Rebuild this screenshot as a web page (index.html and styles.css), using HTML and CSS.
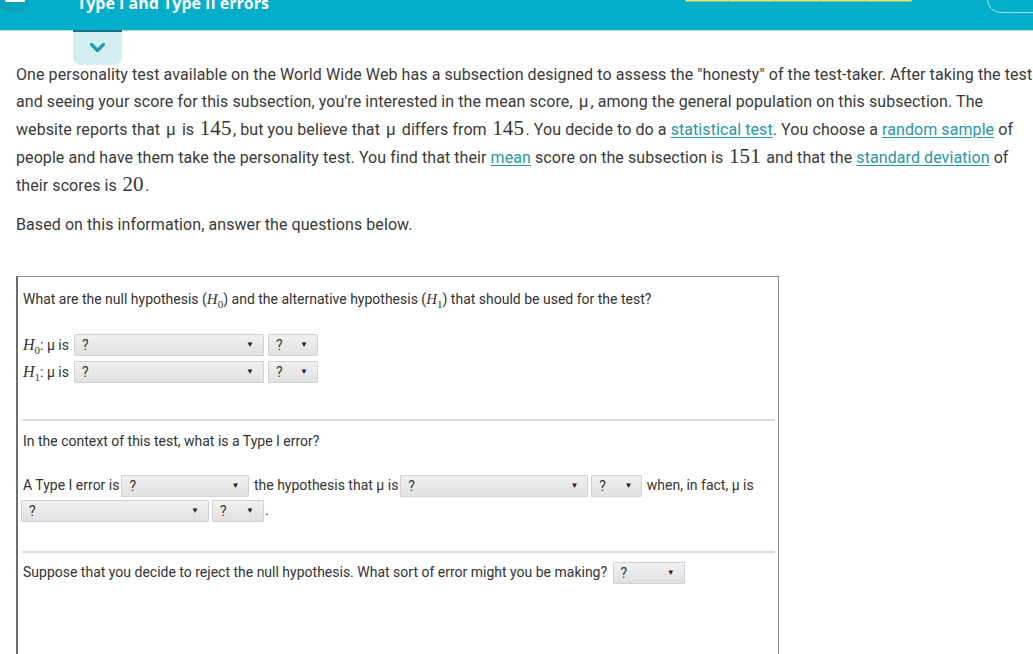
FILE: index.html
```html
<!DOCTYPE html>
<html lang="en">
<head>
<meta charset="utf-8">
<title>Type I and Type II errors</title>
<link rel="stylesheet" href="styles.css">
</head>
<body>
<header class="topbar">
  <div class="menu-btn"><span class="menu-line"></span></div>
  <div class="title">Type I and Type II errors</div>
  <div class="progress">
    <span class="seg"></span><span class="seg"></span><span class="seg"></span><span class="seg"></span><span class="seg"></span>
  </div>
  <div class="pill"></div>
  <div class="tab">
    <svg width="17" height="11" viewBox="0 0 17 11"><path d="M2.5 2.5 L8.5 8.5 L14.5 2.5" fill="none" stroke="#1c9fb6" stroke-width="3.2" stroke-linecap="round" stroke-linejoin="round"/></svg>
  </div>
</header>

<main class="content">
  <p class="intro">One personality test available on the World Wide Web has a subsection designed to assess the "honesty" of the test-taker. After taking the test and seeing your score for this subsection, you're interested in the mean score, <span class="mu">μ</span>, among the general population on this subsection. The website reports that <span class="mu">μ</span> is <span class="num">145</span>, but you believe that <span class="mu">μ</span> differs from <span class="num">145</span>. You decide to do a <a class="term" href="#">statistical test</a>. You choose a <a class="term" href="#">random sample</a> of people and have them take the personality test. You find that their <a class="term" href="#">mean</a> score on the subsection is <span class="num">151</span> and that the <a class="term" href="#">standard deviation</a> of their scores is <span class="num">20</span>.</p>
  <p class="intro">Based on this information, answer the questions below.</p>

  <section class="qbox">
    <div class="q q1">
      <p class="qtext">What are the null hypothesis (<span class="hv">H</span><sub class="sb">0</sub>) and the alternative hypothesis (<span class="hv">H</span><sub class="sb">1</sub>) that should be used for the test?</p>
      <div class="hrows">
        <div class="hrow"><span class="hlabel"><span class="hv big">H</span><sub class="sb">0</sub>: μ is</span><span class="sel w190"><span>?</span><span class="arr">▼</span></span><span class="sel w49"><span>?</span><span class="arr">▼</span></span></div>
        <div class="hrow"><span class="hlabel"><span class="hv big">H</span><sub class="sb">1</sub>: μ is</span><span class="sel w190"><span>?</span><span class="arr">▼</span></span><span class="sel w49"><span>?</span><span class="arr">▼</span></span></div>
      </div>
    </div>
    <div class="q q2">
      <p class="qtext">In the context of this test, what is a Type I error?</p>
      <div class="flow">A Type I error is<span class="sel w128"><span>?</span><span class="arr">▼</span></span> the hypothesis that μ is<span class="sel w188"><span>?</span><span class="arr">▼</span></span><span class="sel w50"><span>?</span><span class="arr">▼</span></span> when, in fact, μ is <span class="sel w188 first"><span>?</span><span class="arr">▼</span></span><span class="sel w52"><span>?</span><span class="arr">▼</span></span>.</div>
    </div>
    <div class="q q3">
      <div class="flow">Suppose that you decide to reject the null hypothesis. What sort of error might you be making? <span class="sel w72"><span>?</span><span class="arr">▼</span></span></div>
    </div>
  </section>
</main>
</body>
</html>
```

FILE: styles.css
```css
html, body {
  margin: 0;
  padding: 0;
  background: #ffffff;
  overflow: hidden;
}
body {
  font-family: Roboto, "Liberation Sans", Arial, sans-serif;
  color: #3a3a3a;
  width: 1033px;
  height: 654px;
}

/* ---------- header ---------- */
.topbar {
  position: relative;
  height: 30px;
  background: #05aec8;
  border-bottom: 1px solid #a9e3ec;
  display: flex;
  align-items: flex-start;
}
.menu-btn {
  flex: none;
  width: 34px;
  height: 24px;
  margin-left: -4px;
  margin-top: -12px;
  border-radius: 50%;
  background: #0aa3bc;
  display: flex;
  justify-content: center;
}
.menu-line {
  width: 20px;
  height: 2px;
  margin-top: 12px;
  margin-left: 4px;
  background: #ffffff;
  border-radius: 1px;
}
.title {
  flex: none;
  width: 200px;
  margin-left: 47px;
  margin-top: -7px;
  color: #ffffff;
  font-family: "Open Sans", Lato, sans-serif;
  font-weight: 700;
  font-size: 16px;
  line-height: 20px;
  white-space: nowrap;
}
.progress {
  flex: none;
  display: flex;
  width: 227px;
  margin-left: 408px;
  margin-top: -1px;
  height: 3px;
  border: 1px solid #9ebe5c;
  border-top: none;
  background: #d6e79a;
  box-sizing: border-box;
}
.seg {
  flex: 1;
  border-left: 1px solid #a9c56a;
}
.seg:first-child { border-left: none; flex: 0.95; }
.pill {
  flex: none;
  margin-left: 75px;
  margin-top: -14px;
  width: 80px;
  height: 27px;
  border: 1.5px solid #8fe6f2;
  border-radius: 14px;
  box-sizing: border-box;
}
.tab {
  position: absolute;
  left: 73px;
  top: 30px;
  width: 49px;
  height: 35px;
  box-sizing: border-box;
  background: #d4eef4;
  border-top: 2px solid #1b6f80;
  border-radius: 0 0 8px 8px;
  display: flex;
  justify-content: center;
  align-items: center;
}
.tab svg { display: block; margin-top: -2px; }

/* ---------- content ---------- */
.content {
  padding: 30px 0 0 16px;
  width: 1020px;
}
.intro {
  margin: 0 0 12px 0;
  font-size: 16px;
  line-height: 27px;
  letter-spacing: 0.08px;
}
.intro + .intro { margin-bottom: 38px; }
.mu {
  font-size: 17px;
  padding: 0 2px;
}
.num {
  font-family: "Liberation Serif", "Times New Roman", serif;
  font-size: 21px;
  color: #333;
  padding: 0 1.5px;
}
.term {
  color: #2b95a8;
  text-decoration: underline;
  text-underline-offset: 2px;
}

/* ---------- question box ---------- */
.qbox {
  width: 753px;
  border: 1px solid #8a8a8a;
  border-left: 2px solid #6e6e6e;
  padding: 0 3px 0 4px;
  font-size: 14px;
  color: #333;
  min-height: 420px;
}
.q {
  padding: 13px 2px 18px 1px;
  border-bottom: 2px solid #dcdcdc;
}
.q1 { padding-bottom: 19px; }
.q2 { padding-top: 11px; padding-bottom: 28px; }
.q3 { border-bottom: none; padding-top: 8px; }
.qtext {
  margin: 0 0 26px 0;
  line-height: 18px;
}
.q2 .qtext { margin-bottom: 23px; }
.hv {
  font-family: "Liberation Serif", "Times New Roman", serif;
  font-style: italic;
  font-size: 15px;
}
.hv.big { font-size: 16px; }
.sb {
  font-family: "Liberation Serif", "Times New Roman", serif;
  font-size: 11px;
  vertical-align: -4px;
  line-height: 0;
}
.hrows {
  display: flex;
  flex-direction: column;
  gap: 5px;
  padding-bottom: 17px;
}
.hrow {
  display: flex;
  align-items: center;
  height: 22px;
}
.hlabel {
  flex: none;
  margin-right: 3px;
  white-space: nowrap;
}
.flow {
  line-height: 23px;
}
.q2 .flow { line-height: 25px; }
.sel {
  flex: none;
  display: inline-flex;
  justify-content: space-between;
  align-items: center;
  box-sizing: border-box;
  height: 22px;
  padding: 0 9px 0 7px;
  margin: 0 1px 0 2px;
  vertical-align: middle;
  background: linear-gradient(#f1f1f1, #e1e1e1);
  border: 1px solid #d2d2d2;
  border-radius: 1px;
  color: #333;
  font-size: 14px;
  line-height: 20px;
}
.hrow .sel + .sel { margin-left: 3px; }
.sel.first { margin-left: -2px; }
.arr {
  font-size: 8px;
  color: #222;
}
.w190 { width: 190px; }
.w188 { width: 188px; }
.w128 { width: 128px; }
.w49 { width: 50px; }
.w50 { width: 51px; }
.w52 { width: 52px; }
.w72 { width: 72px; }
```
